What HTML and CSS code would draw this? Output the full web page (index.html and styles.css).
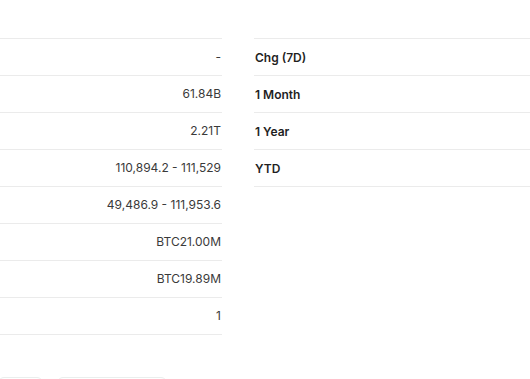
FILE: index.html
```html
<!DOCTYPE html>
<html>
<head>
<meta charset="utf-8">
<link rel="stylesheet" href="styles.css">
</head>
<body>
<div class="page">
  <div class="columns">
    <div class="col col-left">
      <div class="row"><span class="val">-</span></div>
      <div class="row"><span class="val">61.84B</span></div>
      <div class="row"><span class="val">2.21T</span></div>
      <div class="row"><span class="val">110,894.2 - 111,529</span></div>
      <div class="row"><span class="val">49,486.9 - 111,953.6</span></div>
      <div class="row"><span class="val">BTC21.00M</span></div>
      <div class="row"><span class="val">BTC19.89M</span></div>
      <div class="row"><span class="val">1</span></div>
    </div>
    <div class="col col-right">
      <div class="row"><span class="label">Chg (7D)</span></div>
      <div class="row"><span class="label">1 Month</span></div>
      <div class="row"><span class="label">1 Year</span></div>
      <div class="row"><span class="label">YTD</span></div>
    </div>
  </div>
  <div class="buttons">
    <div class="btn btn-small"></div>
    <div class="btn btn-wide"></div>
  </div>
</div>
</body>
</html>
```

FILE: styles.css
```css
html, body {
  margin: 0;
  padding: 0;
  background: #ffffff;
  overflow: hidden;
}
body {
  font-family: Inter, "Noto Sans", sans-serif;
  width: 530px;
  height: 379px;
}
.page {
  padding-top: 38px;
  height: 341px;
  overflow: hidden;
}
.columns {
  display: flex;
  gap: 32px;
  align-items: flex-start;
}
.col {
  border-top: 1px solid #ebebeb;
}
.col-left {
  width: 222px;
  flex: none;
}
.col-right {
  width: 276px;
  flex: none;
}
.row {
  height: 36px;
  border-bottom: 1px solid #ebebeb;
  display: flex;
  align-items: center;
}
.col-left .row {
  justify-content: flex-end;
  padding-right: 1px;
}
.val {
  font-size: 12px;
  color: #3a3a3a;
  position: relative;
  top: -0.5px;
}
.label {
  font-size: 12px;
  font-weight: 600;
  color: #1f1f1f;
  padding-left: 1px;
}
.buttons {
  display: flex;
  gap: 14px;
  margin-top: 42px;
}
.btn {
  height: 32px;
  border: 1px solid #eaeeed;
  border-radius: 6px;
  flex: none;
}
.btn-small {
  width: 43px;
  margin-left: -2px;
}
.btn-wide {
  width: 108px;
}
```
